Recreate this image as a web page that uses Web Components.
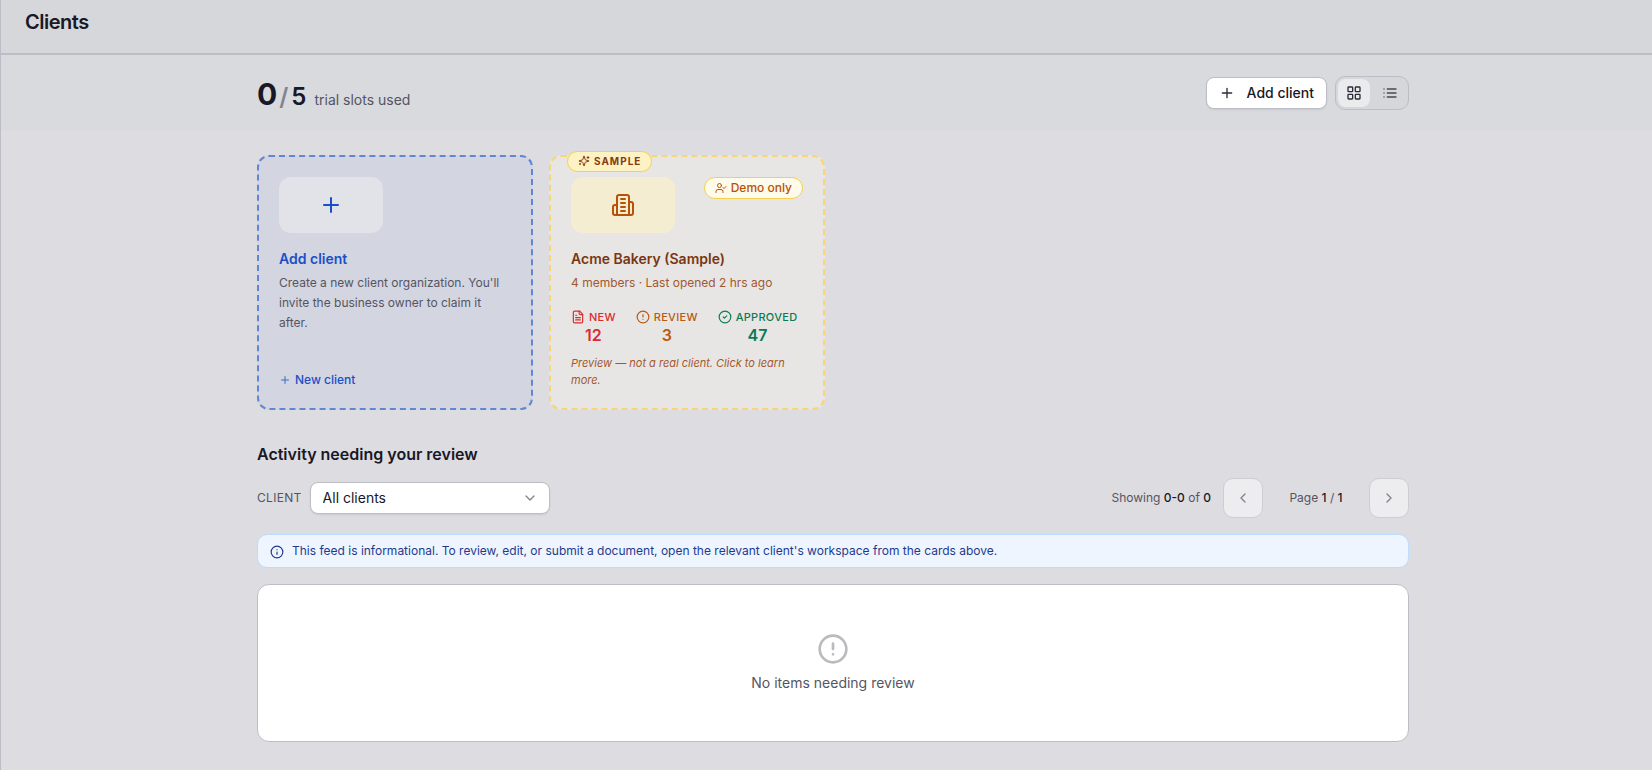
<!DOCTYPE html>
<html lang="en">
<head>
<meta charset="utf-8">
<title>Clients</title>
<style>
  html { background: #dddce1; }
  body { margin: 0; font-family: Inter, "Liberation Sans", sans-serif; color: #181826; }
</style>
</head>
<body>
<clients-page></clients-page>

<script>
const ICONS = {
  plus: '<path d="M5 12h14M12 5v14"/>',
  grid: '<rect x="3" y="3" width="7" height="7" rx="1"/><rect x="14" y="3" width="7" height="7" rx="1"/><rect x="14" y="14" width="7" height="7" rx="1"/><rect x="3" y="14" width="7" height="7" rx="1"/>',
  list: '<path d="M3 6h.01M3 12h.01M3 18h.01M8 6h13M8 12h13M8 18h13"/>',
  building: '<path d="M6 22V4a2 2 0 0 1 2-2h8a2 2 0 0 1 2 2v18Z"/><path d="M6 12H4a2 2 0 0 0-2 2v6a2 2 0 0 0 2 2h2"/><path d="M18 9h2a2 2 0 0 1 2 2v9a2 2 0 0 1-2 2h-2"/><path d="M10 6h4M10 10h4M10 14h4M10 18h4"/>',
  sparkles: '<path d="M9.937 15.5A2 2 0 0 0 8.5 14.063l-6.135-1.582a.5.5 0 0 1 0-.962L8.5 9.936A2 2 0 0 0 9.937 8.5l1.582-6.135a.5.5 0 0 1 .963 0L14.063 8.5A2 2 0 0 0 15.5 9.937l6.135 1.581a.5.5 0 0 1 0 .964L15.5 14.063a2 2 0 0 0-1.437 1.437l-1.582 6.135a.5.5 0 0 1-.963 0z"/><path d="M20 3v4M22 5h-4M4 17v2M5 18H3"/>',
  userCheck: '<path d="m16 11 2 2 4-4"/><path d="M16 21v-2a4 4 0 0 0-4-4H6a4 4 0 0 0-4 4v2"/><circle cx="9" cy="7" r="4"/>',
  file: '<path d="M15 2H6a2 2 0 0 0-2 2v16a2 2 0 0 0 2 2h12a2 2 0 0 0 2-2V7Z"/><path d="M14 2v4a2 2 0 0 0 2 2h4M10 9H8M16 13H8M16 17H8"/>',
  alert: '<circle cx="12" cy="12" r="10"/><path d="M12 8v4M12 16h.01"/>',
  check: '<circle cx="12" cy="12" r="10"/><path d="m9 12 2 2 4-4"/>',
  info: '<circle cx="12" cy="12" r="10"/><path d="M12 16v-4M12 8h.01"/>',
  left: '<path d="m15 18-6-6 6-6"/>',
  right: '<path d="m9 18 6-6-6-6"/>',
  down: '<path d="m6 9 6 6 6-6"/>'
};

function define(name, render) {
  customElements.define(name, class extends HTMLElement {
    constructor() {
      super();
      this.attachShadow({ mode: 'open' });
    }
    connectedCallback() {
      this.shadowRoot.innerHTML = '<style>*{box-sizing:border-box}:host{box-sizing:border-box}</style>' + render(this);
    }
  });
}

define('ui-icon', el => `
  <style>
    :host { display: inline-flex; flex: none; width: ${el.getAttribute('size') || 16}px; height: ${el.getAttribute('size') || 16}px; }
    svg { width: 100%; height: 100%; display: block; }
  </style>
  <svg viewBox="0 0 24 24" fill="none" stroke="currentColor" stroke-width="2" stroke-linecap="round" stroke-linejoin="round" aria-hidden="true">${ICONS[el.getAttribute('name')]}</svg>`);

define('page-header', () => `
  <style>
    :host { display: block; background: #d6d7da; border-bottom: 2px solid #bdbdc7; padding: 8px 24px 17px; }
    h1 { margin: 0; font-size: 20px; line-height: 28px; font-weight: 600; letter-spacing: -0.025em; }
  </style>
  <h1><slot></slot></h1>`);

define('slot-usage', () => `
  <style>
    :host { display: flex; align-items: baseline; padding-top: 8px; line-height: 36px; }
    .used { font-size: 30px; font-weight: 700; }
    .slash { font-size: 24px; font-weight: 600; color: #83838e; margin: 0 3px 0 2px; }
    .total { font-size: 24px; font-weight: 600; }
    .label { font-size: 14px; color: #555562; margin-left: 8px; }
  </style>
  <span class="used">0</span><span class="slash">/</span><span class="total">5</span><span class="label">trial slots used</span>`);

define('view-toggle', () => `
  <style>
    :host { display: flex; gap: 4px; padding: 2px; border: 1px solid #bdbdc7; border-radius: 10px; background: #d6d7da; }
    button { width: 32px; height: 28px; display: grid; place-items: center; padding: 0; border: 0; border-radius: 8px; background: none; color: #484854; }
    button[aria-pressed=true] { background: #ebebed; color: #2c2c3a; }
  </style>
  <button aria-label="Grid view" aria-pressed="true"><ui-icon name="grid"></ui-icon></button>
  <button aria-label="List view" aria-pressed="false"><ui-icon name="list"></ui-icon></button>`);

define('action-button', () => `
  <style>
    :host { display: block; }
    button { display: flex; align-items: center; gap: 12px; height: 32px; padding: 0 12px; border: 1px solid #bdbdc7; border-radius: 8px; background: #fff; color: #181826; font: 500 14px/20px Inter, sans-serif; box-shadow: 0 1px 2px rgb(0 0 0 / .08); white-space: nowrap; }
    ui-icon { color: #2c2c3a; }
  </style>
  <button><ui-icon name="plus"></ui-icon><slot></slot></button>`);

define('add-card', () => `
  <style>
    :host { display: flex; }
    button { flex: 1; display: flex; flex-direction: column; align-items: flex-start; text-align: left; padding: 20px; border: 2px dashed #6186d5; border-radius: 12px; background: #d3d5e1; color: #1b4fc9; font-family: Inter, sans-serif; }
    .tile { width: 104px; height: 56px; border-radius: 12px; background: #e2e3e8; display: grid; place-items: center; }
    .name { margin-top: 16px; font-size: 14px; line-height: 20px; font-weight: 600; }
    .text { margin-top: 4px; font-size: 12px; line-height: 20px; color: #555562; }
    .more { margin-top: auto; display: flex; align-items: center; gap: 4px; font-size: 12px; line-height: 16px; font-weight: 500; }
    .more ui-icon { opacity: .8; }
  </style>
  <button>
    <span class="tile"><ui-icon name="plus" size="24"></ui-icon></span>
    <span class="name">Add client</span>
    <span class="text">Create a new client organization. You'll invite the business owner to claim it after.</span>
    <span class="more"><ui-icon name="plus" size="12"></ui-icon>New client</span>
  </button>`);

define('card-stat', el => `
  <style>
    :host { display: flex; flex-direction: column; align-items: center; }
    .label { display: flex; align-items: center; gap: 4px; font-size: 11px; line-height: 16px; font-weight: 500; letter-spacing: 0.025em; }
    .value { font-size: 16px; line-height: 20px; font-weight: 600; }
  </style>
  <span class="label"><ui-icon name="${el.getAttribute('icon')}" size="14"></ui-icon>${el.getAttribute('label')}</span>
  <span class="value"><slot></slot></span>`);

define('sample-card', () => `
  <style>
    :host { display: flex; position: relative; }
    button { flex: 1; min-width: 0; display: flex; flex-direction: column; justify-content: flex-start; text-align: left; padding: 20px 20px 19px; border: 2px dashed #f7d774; border-radius: 12px; background: #e7e6e5; color: #a3582f; font-family: Inter, sans-serif; }
    .ribbon, .demo { display: flex; align-items: center; gap: 4px; padding: 0 10px 1px; border: 1px solid #f6d04c; border-radius: 12px; }
    .ribbon { position: absolute; top: -4px; left: 18px; height: 21px; background: #fdf2c4; color: #873c10; font-size: 10px; font-weight: 700; letter-spacing: 0.1em; }
    .top { display: flex; justify-content: space-between; align-items: flex-start; }
    .tile { width: 104px; height: 56px; border-radius: 12px; background: #f5edd1; color: #b85208; display: grid; place-items: center; }
    .demo { height: 22px; background: #fffbeb; color: #b85208; font-size: 12px; font-weight: 500; }
    .name { margin-top: 16px; font-size: 14px; line-height: 20px; font-weight: 600; color: #7a3612; }
    .meta { margin-top: 4px; font-size: 12px; line-height: 20px; }
    .stats { margin-top: 16px; display: flex; gap: 20px; }
    .new { color: #dc2a2e; } .review { color: #b85a10; } .ok { color: #0a7a55; }
    .note { margin-top: 10px; font-size: 11px; line-height: 17px; font-style: italic; }
  </style>
  <button>
    <span class="top">
      <span class="tile"><ui-icon name="building" size="24"></ui-icon></span>
      <span class="demo"><ui-icon name="userCheck" size="12"></ui-icon>Demo only</span>
    </span>
    <span class="name">Acme Bakery (Sample)</span>
    <span class="meta">4 members · Last opened 2 hrs ago</span>
    <span class="stats">
      <card-stat class="new" icon="file" label="NEW">12</card-stat>
      <card-stat class="review" icon="alert" label="REVIEW">3</card-stat>
      <card-stat class="ok" icon="check" label="APPROVED">47</card-stat>
    </span>
    <span class="note">Preview — not a real client. Click to learn more.</span>
  </button>
  <span class="ribbon"><ui-icon name="sparkles" size="12"></ui-icon>SAMPLE</span>`);

define('client-filter', () => `
  <style>
    :host { display: flex; align-items: center; gap: 8px; }
    label { font-size: 12px; line-height: 16px; color: #555562; letter-spacing: 0.025em; }
    .field { display: grid; align-items: center; width: 240px; }
    select, ui-icon { grid-area: 1 / 1; }
    select { appearance: none; width: 100%; height: 32px; padding: 0 36px 0 12px; border: 1px solid #bdbdc7; border-radius: 8px; background: #fff; color: #181826; font: 400 14px/20px Inter, sans-serif; box-shadow: 0 1px 2px rgb(0 0 0 / .08); }
    ui-icon { justify-self: end; margin-right: 12px; color: #83838e; pointer-events: none; }
  </style>
  <label for="client">CLIENT</label>
  <span class="field"><select id="client"><option>All clients</option></select><ui-icon name="down"></ui-icon></span>`);

define('feed-pager', () => `
  <style>
    :host { display: flex; align-items: center; font-size: 12px; line-height: 16px; color: #555562; }
    b { font-weight: 500; color: #181826; }
    button { width: 40px; height: 40px; display: grid; place-items: center; padding: 0; border: 1px solid #cdcdd4; border-radius: 10px; background: #ededef; color: #83838e; }
    .range { margin-right: 12px; }
    .page { width: 106px; text-align: center; }
  </style>
  <span class="range">Showing <b>0-0</b> of <b>0</b></span>
  <button disabled aria-label="Previous page"><ui-icon name="left"></ui-icon></button>
  <span class="page">Page <b>1</b> / <b>1</b></span>
  <button disabled aria-label="Next page"><ui-icon name="right"></ui-icon></button>`);

define('info-note', () => `
  <style>
    :host { display: flex; align-items: flex-start; gap: 8px; padding: 8px 12px; border: 1px solid #bddbfe; border-radius: 10px; background: #eef5ff; color: #1e3a8f; font-size: 12px; line-height: 16px; }
    ui-icon { margin-top: 2px; }
  </style>
  <ui-icon name="info" size="14"></ui-icon><slot></slot>`);

define('empty-state', () => `
  <style>
    :host { display: flex; flex-direction: column; align-items: center; gap: 8px; padding: 48px 24px; border: 1px solid #bdbdc7; border-radius: 12px; background: #fff; color: #555562; font-size: 14px; line-height: 20px; }
    ui-icon { color: #bababf; }
  </style>
  <ui-icon name="alert" size="32"></ui-icon><slot></slot>`);

define('clients-page', () => `
  <style>
    :host { display: block; min-height: 100vh; border-left: 1px solid #bdbdc7; }
    .wrap { max-width: 1152px; margin: 0 auto; }
    .band, main { padding: 0 24px 0 37px; }
    .band { background: #d9dade; }
    .band .wrap { display: flex; align-items: center; justify-content: space-between; height: 76px; }
    .actions { display: flex; align-items: center; gap: 8px; }
    main { padding-top: 24px; padding-bottom: 28px; }
    .cards { display: grid; grid-template-columns: repeat(4, minmax(0, 1fr)); gap: 16px; }
    .cards > * { min-height: 255px; }
    h2 { margin: 32px 0 12px; font-size: 16px; line-height: 24px; font-weight: 600; }
    .tools { display: flex; align-items: center; justify-content: space-between; }
    info-note, empty-state { margin-top: 16px; }
  </style>
  <page-header>Clients</page-header>
  <section class="band"><div class="wrap">
    <slot-usage></slot-usage>
    <div class="actions"><action-button>Add client</action-button><view-toggle></view-toggle></div>
  </div></section>
  <main><div class="wrap">
    <div class="cards"><add-card></add-card><sample-card></sample-card></div>
    <h2>Activity needing your review</h2>
    <div class="tools"><client-filter></client-filter><feed-pager></feed-pager></div>
    <info-note>This feed is informational. To review, edit, or submit a document, open the relevant client's workspace from the cards above.</info-note>
    <empty-state>No items needing review</empty-state>
  </div></main>`);
</script>
</body>
</html>
